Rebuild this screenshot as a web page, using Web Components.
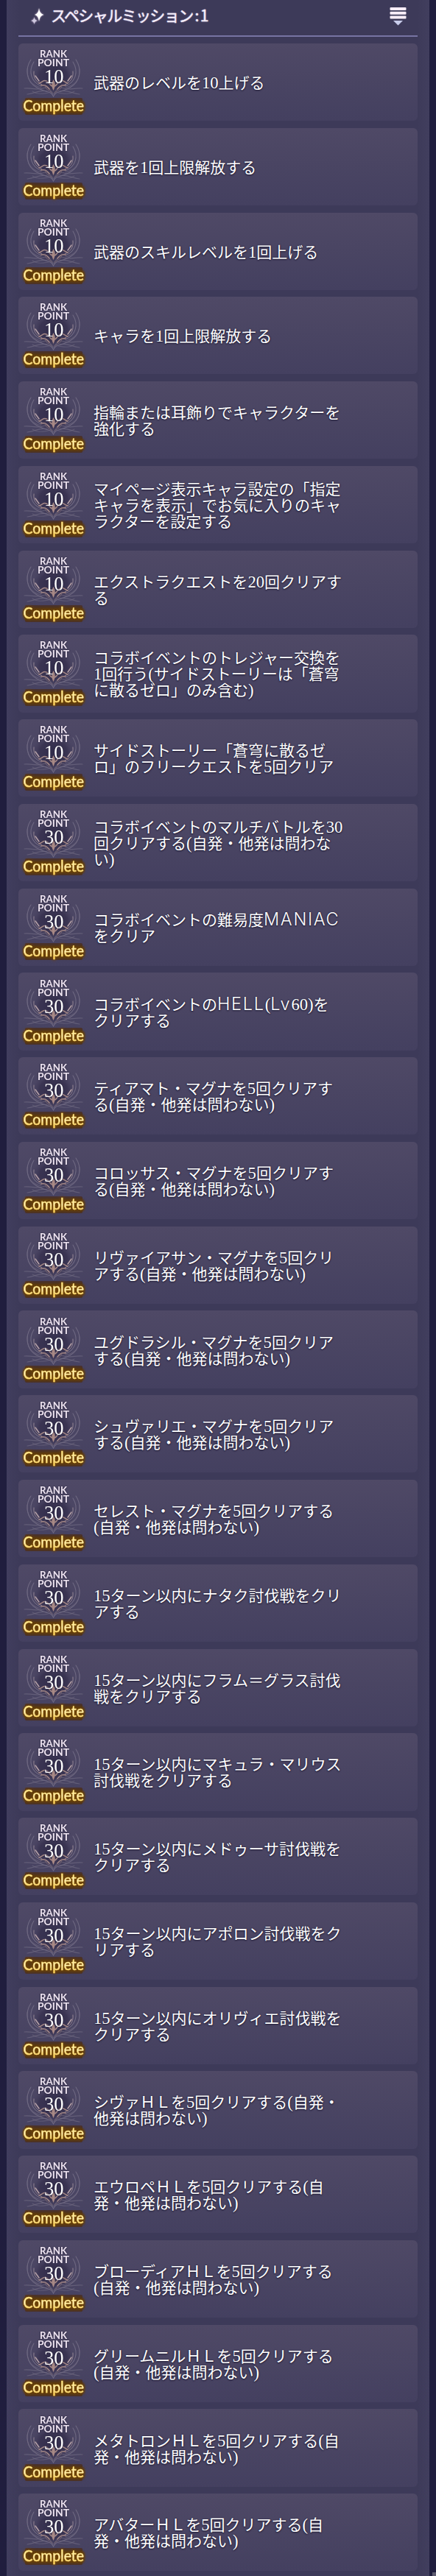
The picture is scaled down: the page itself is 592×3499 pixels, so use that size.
<!DOCTYPE html>
<html lang="ja">
<head>
  <meta charset="utf-8">
  <title>スペシャルミッション</title>
  <style>
    body {
      margin: 0;
      background: #201e3e;
    }
  </style>
</head>
<body>
  <mission-panel heading="スペシャルミッション" count="1"></mission-panel>

  <script>
    const missions = [
      [10, ['武器のレベルを10上げる']],
      [10, ['武器を1回上限解放する']],
      [10, ['武器のスキルレベルを1回上げる']],
      [10, ['キャラを1回上限解放する']],
      [10, ['指輪または耳飾りでキャラクターを', '強化する']],
      [10, ['マイページ表示キャラ設定の「指定', 'キャラを表示」でお気に入りのキャ', 'ラクターを設定する']],
      [10, ['エクストラクエストを20回クリアす', 'る']],
      [10, ['コラボイベントのトレジャー交換を', '1回行う(サイドストーリーは「蒼穹', 'に散るゼロ」のみ含む)']],
      [10, ['サイドストーリー「蒼穹に散るゼ', 'ロ」のフリークエストを5回クリア']],
      [30, ['コラボイベントのマルチバトルを30', '回クリアする(自発・他発は問わな', 'い)']],
      [30, ['コラボイベントの難易度MANIAC', 'をクリア']],
      [30, ['コラボイベントのHELL(Lv60)を', 'クリアする']],
      [30, ['ティアマト・マグナを5回クリアす', 'る(自発・他発は問わない)']],
      [30, ['コロッサス・マグナを5回クリアす', 'る(自発・他発は問わない)']],
      [30, ['リヴァイアサン・マグナを5回クリ', 'アする(自発・他発は問わない)']],
      [30, ['ユグドラシル・マグナを5回クリア', 'する(自発・他発は問わない)']],
      [30, ['シュヴァリエ・マグナを5回クリア', 'する(自発・他発は問わない)']],
      [30, ['セレスト・マグナを5回クリアする', '(自発・他発は問わない)']],
      [30, ['15ターン以内にナタク討伐戦をクリ', 'アする']],
      [30, ['15ターン以内にフラム＝グラス討伐', '戦をクリアする']],
      [30, ['15ターン以内にマキュラ・マリウス', '討伐戦をクリアする']],
      [30, ['15ターン以内にメドゥーサ討伐戦を', 'クリアする']],
      [30, ['15ターン以内にアポロン討伐戦をク', 'リアする']],
      [30, ['15ターン以内にオリヴィエ討伐戦を', 'クリアする']],
      [30, ['シヴァＨＬを5回クリアする(自発・', '他発は問わない)']],
      [30, ['エウロペＨＬを5回クリアする(自', '発・他発は問わない)']],
      [30, ['ブローディアＨＬを5回クリアする', '(自発・他発は問わない)']],
      [30, ['グリームニルＨＬを5回クリアする', '(自発・他発は問わない)']],
      [30, ['メタトロンＨＬを5回クリアする(自', '発・他発は問わない)']],
      [30, ['アバターＨＬを5回クリアする(自', '発・他発は問わない)']]
    ]

    class RankBadge extends HTMLElement {
      constructor () {
        super()
        this.shadow = this.attachShadow({ mode: 'open' })
      }

      connectedCallback () {
        this.render()
      }

      render () {
        this.shadow.innerHTML =
        /* html */`
          <style>
            :host {
              display: block;
              width: 102px;
              height: 105px;
            }

            svg {
              display: block;
              overflow: visible;
            }

            .label {
              font: 700 13px Lato, sans-serif;
              fill: #eee4f1;
              filter: drop-shadow(0 0 1px #28233c);
            }

            .points {
              font: 28px "Liberation Serif", serif;
              fill: #fff;
              filter: drop-shadow(0 0 1px #28233c);
            }

            .complete {
              font: 400 20.500px Lato, sans-serif;
              fill: url(#gold);
              stroke: #ffe080;
              stroke-width: 0.5;
              filter: drop-shadow(0 0 1.5px #6b4000) drop-shadow(0 0 2px #7a4a08);
            }
          </style>

          <svg width="102" height="105" viewBox="0 0 102 105">
            <defs>
              <radialGradient id="shade">
                <stop offset="0" stop-color="#312c4b"/>
                <stop offset=".65" stop-color="#37314f" stop-opacity=".85"/>
                <stop offset="1" stop-color="#443e5c" stop-opacity="0"/>
              </radialGradient>
              <linearGradient id="gold" x1="0" y1="0" x2="0" y2="1">
                <stop offset="0.1" stop-color="#ffe56e"/>
                <stop offset="0.55" stop-color="#fff3bd"/>
                <stop offset="0.9" stop-color="#fac945"/>
              </linearGradient>
              <filter id="soft" x="-20%" y="-40%" width="140%" height="180%">
                <feGaussianBlur stdDeviation="1.3"/>
              </filter>
              <g id="branch" fill="none" stroke-linecap="round">
                <g stroke="#6f6982" stroke-width="1.1">
                  <path d="M17 22C9 34 10 52 25 60S44 64 47.500 72"/>
                  <path d="M21 25C13 38 17 52 31 58"/>
                  <path d="M12 34C11 48 18 57 31 60" opacity=".6"/>
                  <path d="M8 61C20 60 26 64 33 61S43 62 47 69" opacity=".7"/>
                  <path d="M12 69C23 68 29 62 39 65" opacity=".7"/>
                  <path d="M19 65C26 70 34 68 41 67" opacity=".55"/>
                </g>
                <path d="M21 38C20 48 25 53 32 56" stroke="#958694"/>
                <path d="M23 44L28 51" stroke="#b7a2a8" stroke-width="1.500"/>
                <path d="M28 54C33 53 33 49 38 51S42 57 46 58M31 57C36 56 40 59 42 62" stroke="#a58886" stroke-width="1.500"/>
                <path d="M36 56C35 62 42 64 46 67" stroke="#796673"/>
              </g>
            </defs>
            <ellipse cx="47.500" cy="45" rx="29" ry="24" fill="url(#shade)"/>
            <use href="#branch"/>
            <use href="#branch" transform="translate(95 0) scale(-1 1)"/>
            <path d="M47.500 49Q43 56 47.500 64Q52 56 47.500 49Z" fill="#a88985"/>
            <text class="label" x="29" y="19" textLength="37" lengthAdjust="spacingAndGlyphs">RANK</text>
            <text class="label" x="26" y="31" textLength="43" lengthAdjust="spacingAndGlyphs">POINT</text>
            <text class="points" x="35" y="54" textLength="26.500" lengthAdjust="spacingAndGlyphs">${this.getAttribute('points')}</text>
            <rect x="9" y="74" width="78" height="23" rx="2" fill="#4b2e20" opacity=".8"/>
            <rect x="7" y="77" width="83" height="18" rx="6" fill="#593807" opacity=".85" filter="url(#soft)"/>
            <text class="complete" x="6.500" y="92" textLength="82.500" lengthAdjust="spacingAndGlyphs">Complete</text>
          </svg>
        `
      }
    }

    class MissionCard extends HTMLElement {
      constructor () {
        super()
        this.shadow = this.attachShadow({ mode: 'open' })
      }

      connectedCallback () {
        this.render()
      }

      render () {
        this.shadow.innerHTML =
        /* html */`
          <style>
            :host {
              display: flex;
              align-items: center;
              height: 105.200px;
              border-radius: 6px;
              background: linear-gradient(#4f4966, #4a4563 45%, #444060);
            }

            .description {
              padding-bottom: 1px;
              color: #fff;
              font: 21px/22px "Noto Sans CJK JP", sans-serif;
              text-shadow: 0 1px 2px #211d37, 0 0 2px #211d37;
              white-space: nowrap;
            }
          </style>

          <rank-badge points="${this.getAttribute('points')}"></rank-badge>
          <div class="description"><slot></slot></div>
        `
      }
    }

    // Lines keep their own breaks; digits and latin letters use their own faces
    class MissionLine extends HTMLElement {
      constructor () {
        super()
        this.shadow = this.attachShadow({ mode: 'open' })
      }

      connectedCallback () {
        this.render()
      }

      render () {
        const text = this.getAttribute('text')
          .replace(/[0-9()]+|[A-Za-z]+/g, part => {
            return `<span class="${/[A-Za-z]/.test(part) ? 'latin' : 'digits'}">${part}</span>`
          })

        this.shadow.innerHTML =
        /* html */`
          <style>
            :host {
              display: block;
              height: 22px;
            }

            span {
              line-height: 1px;
            }

            .digits {
              font-family: "Liberation Serif", serif;
              font-size: 22.600px;
            }

            .latin {
              font-family: Inter, "Liberation Sans", sans-serif;
              font-size: 23.500px;
              font-weight: 300;
              letter-spacing: 1.700px;
            }
          </style>${text}`
      }
    }

    class MissionPanel extends HTMLElement {
      constructor () {
        super()
        this.shadow = this.attachShadow({ mode: 'open' })
      }

      connectedCallback () {
        this.render()
      }

      render () {
        this.shadow.innerHTML =
        /* html */`
          <style>
            :host {
              display: block;
              box-sizing: border-box;
              height: 3499px;
              overflow: hidden;
              padding: 0 9px;
              background: linear-gradient(#5d5b70, #5d5b70) right bottom / 5px 5px no-repeat;
            }

            .panel {
              box-sizing: border-box;
              height: 100%;
              padding: 0 16px;
              background: linear-gradient(to right, #413e5e, #3d3a59 3%, #3d3a59 97%, #413e5e);
            }

            header {
              display: flex;
              align-items: center;
              box-sizing: border-box;
              height: 50px;
              padding: 0 15px 5px 16px;
              border-bottom: 2px solid #7774a3;
              margin-bottom: 9px;
              color: #f5effb;
            }

            h1 {
              flex: 1;
              margin: 0 0 0 9px;
              padding-bottom: 3px;
              font: 400 21px/22px "Noto Sans CJK JP", sans-serif;
              letter-spacing: -1.600px;
              -webkit-text-stroke: 0.4px #f5effb;
              text-shadow: 0 0 2px #9d86b4;
              white-space: nowrap;
            }

            h1 span {
              margin-left: 3px;
              letter-spacing: 1.500px;
            }

            .sparkle {
              filter: drop-shadow(0 0 1px #bda6c7);
            }

            main {
              display: flex;
              flex-direction: column;
              gap: 9.590px;
            }
          </style>

          <div class="panel">
            <header>
              <svg class="sparkle" width="19" height="24" viewBox="0 0 19 24" fill="#fff">
                <path d="M12 1Q13 9 18.500 10Q13 11 12 19Q11 11 6 10Q11 9 12 1Z"/>
                <path d="M5.500 13Q6 17.500 10 18Q6 19 5.500 23Q5 19 1 18Q5 17.500 5.500 13Z" fill="#cfc9e0"/>
              </svg>
              <h1>${this.getAttribute('heading')}<span>:${this.getAttribute('count')}</span></h1>
              <svg width="23" height="26" viewBox="0 0 23 26">
                <g fill="#f8edf7">
                  <rect x=".5" y="1" width="22" height="4" rx="1"/>
                  <rect x=".5" y="6.800" width="22" height="4" rx="1"/>
                  <rect x=".5" y="12.600" width="22" height="4" rx="1"/>
                </g>
                <path d="M5 19H18L11.500 25.500Z" fill="#c9cdec"/>
              </svg>
            </header>
            <main>
              ${missions.map(([points, lines]) => `
                <mission-card points="${points}">
                  ${lines.map(line => `<mission-line text="${line}"></mission-line>`).join('')}
                </mission-card>
              `).join('')}
            </main>
          </div>
        `
      }
    }

    customElements.define('rank-badge', RankBadge)
    customElements.define('mission-line', MissionLine)
    customElements.define('mission-card', MissionCard)
    customElements.define('mission-panel', MissionPanel)
  </script>
</body>
</html>
